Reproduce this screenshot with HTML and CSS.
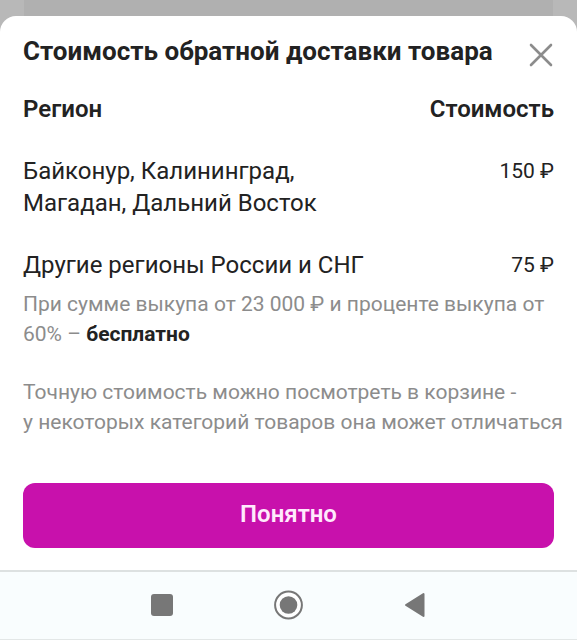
FILE: index.html
```html
<!DOCTYPE html>
<html lang="ru">
<head>
    <meta charset="UTF-8">
    <meta name="viewport" content="width=device-width, initial-scale=1.0">
    <title>Стоимость обратной доставки товара</title>
    <link rel="stylesheet" href="styles.css">
</head>
<body>

<div class="backdrop"><div class="page-card"></div></div>

<main class="sheet">
    <div class="sheet-header">
        <h1>Стоимость обратной доставки товара</h1>
        <button type="button" class="close" aria-label="Закрыть">
            <svg width="26" height="26" viewBox="0 0 26 26" fill="none" stroke="#8c8c8c" stroke-width="2.6" stroke-linecap="round">
                <path d="M3 3L23 23M23 3L3 23"/>
            </svg>
        </button>
    </div>

    <table class="prices">
        <thead>
        <tr>
            <th scope="col">Регион</th>
            <th scope="col" class="price">Стоимость</th>
        </tr>
        </thead>
        <tbody>
        <tr>
            <td>Байконур, Калининград,<br>Магадан, Дальний Восток</td>
            <td class="price">150 ₽</td>
        </tr>
        <tr>
            <td>Другие регионы России и СНГ</td>
            <td class="price">75 ₽</td>
        </tr>
        </tbody>
    </table>

    <p class="note">При сумме выкупа от 23 000 ₽ и проценте выкупа от<br>60% – <b>бесплатно</b></p>
    <p class="note">Точную стоимость можно посмотреть в корзине -<br>у некоторых категорий товаров она может отличаться</p>

    <button type="button" class="submit">Понятно</button>
</main>

<nav class="navbar">
    <button type="button" aria-label="Недавние">
        <svg width="32" height="32" viewBox="0 0 32 32">
            <rect x="5" y="6" width="22" height="22" rx="3" fill="#777"/>
        </svg>
    </button>
    <button type="button" aria-label="Домой">
        <svg width="32" height="32" viewBox="0 0 32 32">
            <circle cx="15.5" cy="17" r="13.4" fill="#fff" stroke="#777" stroke-width="2"/>
            <circle cx="15.5" cy="17" r="8.8" fill="#777"/>
        </svg>
    </button>
    <button type="button" aria-label="Назад">
        <svg width="32" height="32" viewBox="0 0 32 32">
            <path d="M6 17L23.500 6V28Z" fill="#777" stroke="#777" stroke-width="2" stroke-linejoin="round"/>
        </svg>
    </button>
</nav>

</body>
</html>
```

FILE: styles.css
```css
* {
    box-sizing: border-box;
}

body {
    margin: 0;
    min-height: 100vh;
    display: flex;
    flex-direction: column;
    background: #b8b8b8;
    font-family: Roboto, sans-serif;
    color: #222;
}

.backdrop {
    height: 16px;
    padding: 0 24px;
}

.page-card {
    height: 100%;
    background: #b0b0b0;
}

.sheet {
    flex: 1;
    padding: 15px 23px 22px;
    background: #fff;
    border-radius: 16px 16px 0 0;
}

.sheet-header {
    display: flex;
    justify-content: space-between;
    align-items: center;
    height: 40px;
}

h1 {
    margin: 0;
    font-size: 26px;
    line-height: 32px;
    font-weight: 700;
    white-space: nowrap;
}

button {
    border: none;
    background: none;
    padding: 0;
    font-family: inherit;
    cursor: pointer;
}

.close {
    display: flex;
    margin-top: 7px;
}

.prices {
    width: 100%;
    margin-top: 22px;
    border-collapse: collapse;
    font-size: 24px;
    line-height: 32px;
}

.prices th,
.prices td {
    padding: 0 0 30px;
    text-align: left;
    vertical-align: top;
}

.prices tr:last-child td {
    padding-bottom: 8px;
}

.prices thead th {
    font-weight: 600;
}

.prices .price {
    text-align: right;
}

.prices td.price {
    font-size: 21px;
    white-space: nowrap;
}

.note {
    margin: 0 0 28px;
    font-size: 21px;
    line-height: 30px;
    color: #8c8c8c;
    white-space: nowrap;
}

.note b {
    color: #222;
}

.submit {
    display: block;
    width: 100%;
    height: 65px;
    margin-top: 46px;
    padding-bottom: 3px;
    border-radius: 12px;
    background: #c811ac;
    color: #ffeafc;
    font-size: 24px;
    font-weight: 600;
}

.navbar {
    display: flex;
    justify-content: center;
    align-items: center;
    gap: 95px;
    height: 70px;
    background: #f9fdfe;
    border-top: 2px solid #dde1e1;
    border-bottom: 1px solid #e3e7e7;
}
```
